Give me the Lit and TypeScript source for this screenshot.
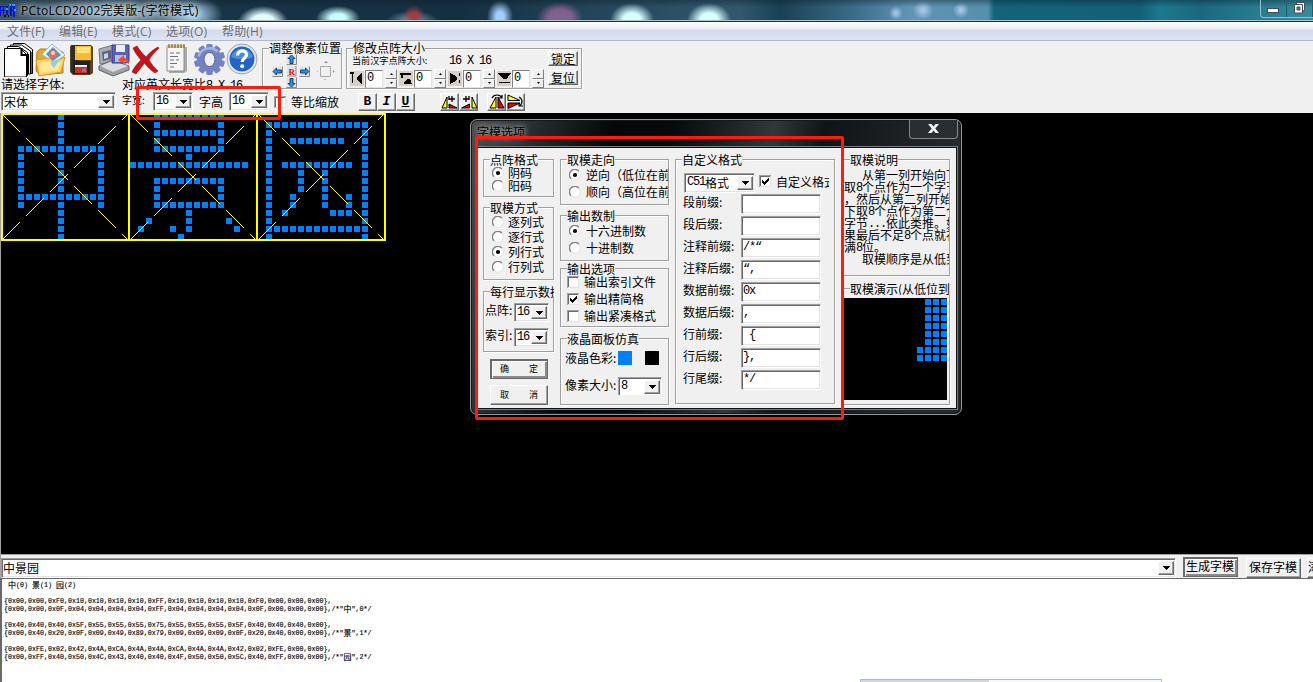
import { LitElement, html, svg, css, nothing } from "lit";
import { customElement } from "lit/decorators.js";

type Glyph = { ch: string; low: string[]; high: string[] };

const bytes = (s: string) => s.split(" ");

const GLYPHS: Glyph[] = [
  {
    ch: "中",
    low: bytes("00 00 F0 10 10 10 10 FF 10 10 10 10 F0 00 00 00"),
    high: bytes("00 00 0F 04 04 04 04 FF 04 04 04 04 0F 00 00 00"),
  },
  {
    ch: "景",
    low: bytes("40 40 40 5F 55 55 55 75 55 55 55 5F 40 40 40 00"),
    high: bytes("00 40 20 0F 09 49 89 79 09 09 09 0F 20 40 00 00"),
  },
  {
    ch: "园",
    low: bytes("00 FE 02 42 4A CA 4A 4A CA 4A 4A 42 02 FE 00 00"),
    high: bytes("00 FF 40 50 4C 43 40 40 4F 50 50 5C 40 FF 00 00"),
  },
];

/* ---------- small building blocks ---------- */
const tri = svg`<path d="M0 0h7v1H0zM1 1h5v1H1zM2 2h3v1H2zM3 3h1v1H3z"/>`;
const combo = (cls: string, text: unknown) => html`<div class="combo ${cls}">
  <span class="val">${text}</span
  ><span class="drop"><svg width="7" height="4" shape-rendering="crispEdges">${tri}</svg></span>
</div>`;
const num = (t: string) => html`<span class="m">${t}</span>`;
const radio = (label: string, on = false) => html`<div class="opt">
  <svg width="12" height="12">
    <circle cx="6" cy="6" r="5.3" fill="#fff" stroke="#e3e3e3" />
    <path d="M2 9.8A5.3 5.3 0 0 1 9.8 2" fill="none" stroke="#808080" stroke-width="1.3" />
    ${on ? svg`<circle cx="6" cy="6" r="2.1"/>` : nothing}
  </svg><span>${label}</span>
</div>`;
const checkIcon = (on: boolean) => html`<svg width="12" height="12" shape-rendering="crispEdges">
  <path fill="#fff" d="M0 0h12v12H0z" />
  <path fill="#a0a0a0" d="M0 0h12v1H1v11H0z" />
  <path fill="#696969" d="M1 1h10v1H2v9H1z" />
  <path fill="#e3e3e3" d="M11 1h1v11H1v-1h10z" />
  ${on ? svg`<path d="M3 5h1v1h1v1h1V6h1V5h1V4h1V3h1v3H9v1H8v1H7v1H6v1H5V9H4V8H3z"/>` : nothing}
</svg>`;
const check = (label: string, on = false) => html`<div class="opt chk">${checkIcon(on)}<span>${label}</span></div>`;
const group = (cls: string, legend: string, body: unknown) => html`<section class="group ${cls}">
  <span class="legend">${legend}</span>${body}
</section>`;

/* ---------- toolbar icons ---------- */
const icoNew = html`<svg width="32" height="34" viewBox="0 0 32 34">
  <g stroke="#000" fill="#fff">
    <path d="M9.500 .5h11l8 6v24h-19z" /><path d="M6.500 2h11l9 6v23h-20z" />
    <path d="M3.500 3.500h11l9 6v23h-20z" /><path d="M.5 5.500h16l6 6V34H.5z" />
  </g>
  <path d="M17.500 5v7h5l1.500 2v16" fill="none" stroke="#000" stroke-width="2" />
  <path d="M27 9v22M24.500 11v20" stroke="#000" stroke-width="1.200" />
</svg>`;
const icoOpen = html`<svg width="32" height="34" viewBox="0 0 32 34">
  <path d="M2 9l3-3h7l3 3h13v21l-23 2-4-4z" fill="#e3a92d" stroke="#b77e12" />
  <path d="M7 11L17 1l13 11-11 9z" fill="#e8f5ff" stroke="#8db9d8" />
  <path d="M11 11l7-7 8 8-8 6z" fill="#3b9be0" /><circle cx="18" cy="11" r="4" fill="#f4694c" />
  <circle cx="18" cy="10" r="2" fill="#ffd2c0" />
  <path d="M1 17l14-2 3 4 12-5-4 15-22 4z" fill="#ffd463" stroke="#d79b24" />
  <path d="M4 20l10-2 3 4 9-3-3 8-17 3z" fill="#ffe799" />
  <path d="M15 20l10-4-6 9z" fill="#8bd0f0" />
</svg>`;
const icoSave = html`<svg width="26" height="34" viewBox="0 0 26 34">
  <path d="M2 2h20l2 2v26l-3 2H4l-3-3V4z" fill="#5a4320" />
  <path d="M3 2h7v28l-6 1-2-3V4z" fill="#2c2c2a" />
  <path d="M6 3h16v14H6z" fill="#f5bd2e" /><path d="M8 4h13v6H8z" fill="#ffd968" />
  <path d="M8 6h13M8 9h13" stroke="#fff0b0" />
  <path d="M4 18h17v13H4z" fill="#222" /><path d="M6 22h12v8H6z" fill="#d72a18" />
  <path d="M6 22h12v2H6z" fill="#eee" /><path d="M13 26l4-1v4h-4z" fill="#5d80d8" />
</svg>`;
const icoConvert = html`<svg width="33" height="34" viewBox="0 0 33 34">
  <path d="M1 6l14-4v17L2 21z" fill="#a9adb5" stroke="#73777f" />
  <path d="M4 9l9-2v9l-8 2z" fill="#5c6578" /><path d="M6 11l4-1v5l-4 1z" fill="#c6d2e6" />
  <path d="M1 23l13-6 17 6v4l-16 6-14-6z" fill="#9c9fa4" stroke="#62656a" />
  <path d="M2 23l13-5 15 5-15 6z" fill="#d9dbde" />
  <path d="M14 2h17v17l-3 1H14z" fill="#5b60b4" stroke="#393c88" />
  <path d="M18 2h9v7h-9z" fill="#e9ecfa" /><path d="M17 12h11v7H17z" fill="#b6bce6" />
  <path d="M20 17l6-5v3c5 0 6 4 4 7 0-3-2-4-4-4v3z" fill="#ef4a22" />
</svg>`;
const icoDelete = html`<svg width="30" height="34" viewBox="0 0 30 34">
  <path d="M1 5l4-2c3 5 6 8 9 11 4-5 8-8 12-10l1 1c-4 4-8 8-10 12 3 5 6 8 9 11l-3 2c-5-3-8-7-10.500-10-3 4-6 8-8.500 11l-4-2c2-5 6-9 9-12C6 13 3 10 1 5z" fill="#c6121b" stroke="#970b12" stroke-width=".6" />
</svg>`;
const icoNote = html`<svg width="24" height="34" viewBox="0 0 24 34">
  <path d="M3 4h18v24l-3 2H3z" fill="#aaa" /><path d="M1 3h17v25H1z" fill="#f5f6f3" stroke="#8b8f8b" />
  <path d="M1 2h18v3H1z" fill="#e7c766" />
  <path d="M3 1v4M6 1v4M9 1v4M12 1v4M15 1v4M18 1v4" stroke="#5d543d" />
  <path d="M4 10h4m2 0h4M4 13.500h8M4 17h4m2 0h3M4 20.500h7M4 24h4" stroke="#6b757d" stroke-width="1.200" />
</svg>`;
const icoGear = html`<svg width="31" height="34" viewBox="-15.500 -16.500 31 34">
  <g fill="#7382c0">
    ${[0, 36, 72, 108, 144].map((a) => svg`<rect x="-3.200" y="-15.500" width="6.400" height="31" rx="1.500" transform="rotate(${a})"/>`)}
    <circle r="12.500" />
  </g>
  <path d="M-11-3A11.500 11.500 0 0 1 8-8" fill="none" stroke="#a7b4e2" stroke-width="2.500" />
  <ellipse rx="5.500" ry="7" fill="#f0f0f0" stroke="#53629e" />
</svg>`;
const icoHelp = html`<svg width="32" height="34" viewBox="0 0 32 34">
  <circle cx="16" cy="16" r="15" fill="#e4e8ef" stroke="#9ba3b2" />
  <circle cx="16" cy="16" r="12.500" fill="#2465c4" />
  <path d="M5 14a11.500 11.500 0 0 1 22 0c-6 3-15 3-22 0z" fill="#4d8ddd" />
  <path d="M11.500 12.500c0-6 9-6 9-.8 0 3.300-4.300 3.500-4.300 7.300" fill="none" stroke="#fff" stroke-width="3.200" />
  <circle cx="16.200" cy="23.300" r="2" fill="#fff" />
</svg>`;

const arrow = (x: number, y: number, r: number) => svg`<g transform="translate(${x} ${y})">
  <path d="M-5-5H5V5H-5z" fill="#dfe3e8"/><path d="M5-5V5H-5" fill="none" stroke="#888"/>
  <g transform="rotate(${r})"><path d="M0-4.500L3.500-1H1.500V4h-3V-1h-2z" fill="#2f8ee0" stroke="#0b3566" stroke-width=".9"/></g></g>`;

const nudgePad = html`<svg width="78" height="39" viewBox="263 49 78 39">
  ${arrow(291.5, 59.5, 0)}${arrow(277.5, 71.500, -90)}${arrow(304.5, 71.500, 90)}${arrow(291.5, 82.500, 180)}
  <path d="M287 66h9v10h-9z" fill="#e4e4e4" /><path d="M296 66v10h-9" fill="none" stroke="#888" />
  <text x="288.5" y="75" class="rkey">R</text>
  <path d="M320.500 66.500h10v10h-10z" fill="none" stroke="#a8a8a8" />
  <path d="M324 63h4l-2-2zM324 79h2l-1 1zM318 71v1h-1zM333 70v3l1.500-1.500z" fill="#888" />
</svg>`;

const EDGE_PATHS = [
  "M0 1h4v2H3v9H2V3H0zM12 2v11h-1V12H10V11H9V10H8V9H7V6H8V5H9V4H10V3h1V2z",
  "M1 2h11v2H4v3H2V4H1zM5 13l1-3 2-2h2l2 2 1 3z",
  "M11 2h1v3h-1zM11 9h1v3h-1zM2 2v11h1v-1h2v-1h2v-1h1V9h1V6H8V5H7V4H5V3H3V2z",
  "M1 2h13l-3 4-2 2H6L4 6zM2 11h11v1H2z",
];
const edgeCtl = (d: string) => html`<div class="edge">
  <svg width="14" height="15" viewBox="0 0 14 15" shape-rendering="crispEdges"><path fill="#d4d0c8" d="M0 0h14v15H0z" /><path d=${d} /></svg>
  <span class="field">${num("0")}</span>
  <span class="spin"><i><svg width="3" height="2"><path d="M0 2h3L1.500 0z" /></svg></i><i><svg width="3" height="2"><path d="M0 0h3L1.500 2z" /></svg></i></span>
</div>`;

const flips = [
  svg`<path d="M1 15L6 4v11z" fill="#ff0" stroke="#000"/><path d="M8 15v-4l8 4z" fill="#e00" stroke="#000"/><path d="M8 6h6m-3-3v6M8 3v4" stroke="#000" stroke-width="1.300"/>`,
  svg`<path d="M17 15L12 4v11z" fill="#ff0" stroke="#000"/><path d="M9.500 15v-4l-8 4z" fill="#e00" stroke="#000"/><path d="M3 6h6M6 3v6M9 3v4" stroke="#000" stroke-width="1.300"/>`,
  svg`<path d="M2 15L8 4v11z" fill="#ff0" stroke="#000"/><path d="M16 15L10 4v11z" fill="#e00" stroke="#000"/><path d="M4 5c2-4 8-4 10 0m0-3v3h-3" fill="none" stroke="#000" stroke-width="1.200"/>`,
  svg`<path d="M1 7.500V2l12 5.500z" fill="#ff0" stroke="#000"/><path d="M1 10v5.500L13 10z" fill="#e00" stroke="#000"/><path d="M12 4c4 2 4 7 0 9m4 0h-4v-3" fill="none" stroke="#000" stroke-width="1.200"/>`,
];
const flipBtn = (g: unknown) => html`<span class="btn sq"><svg width="18" height="17" viewBox="0 0 18 17">${g}</svg></span>`;

/* ---------- LCD preview ---------- */
const cells = (g: Glyph, gi: number) => {
  const out: unknown[] = [];
  for (let c = 0; c < 16; c++) {
    const v = parseInt(g.low[c], 16) | (parseInt(g.high[c], 16) << 8);
    for (let r = 0; r < 16; r++)
      if ((v >> r) & 1) out.push(svg`<rect x=${2 + gi * 128 + c * 8} y=${1 + r * 8} width="6" height="6"/>`);
  }
  return out;
};
const guides = (x: number) => {
  let d = "";
  for (let i = 0; i < 126; i++)
    if (i % 24 < 18) d += `M${x + 2 + i} ${1 + i}h1v1h-1zM${x + 2 + i} ${126 - i}h1v1h-1z`;
  return svg`<path d=${d}/>`;
};
const lcd = html`<svg width="388" height="130" shape-rendering="crispEdges">
  <g fill="#0080ff">${GLYPHS.map(cells)}</g>
  <g fill="#ff0">${[0, 128, 256].map(guides)}</g>
  <path d="M1 0h385v2H1zM1 126h385v2H1zM1 0h2v128H1zM128 0h2v128h-2zM256 0h2v128h-2zM384 0h2v128h-2z" fill="#ff0" />
</svg>`;

const demoCells = [0, 1, 2, 3].flatMap((c) =>
  Array.from({ length: 8 }, (_, r) => (c > 0 || r > 5 ? svg`<rect x=${73 + c * 8} y=${1 + r * 8} width="6" height="6"/>` : nothing))
);

const hexRow = (b: string[]) => "{" + b.map((x) => "0x" + x).join(",") + "},";

const FIELDS: [string, string][] = [
  ["段前缀:", ""], ["段后缀:", ""], ["注释前缀:", "/*“"], ["注释后缀:", "“,"], ["数据前缀:", "0x"],
  ["数据后缀:", ","], ["行前缀:", " {"], ["行后缀:", "},"], ["行尾缀:", "*/"],
];

@customElement("app-root")
class AppRoot extends LitElement {
  static styles = css`
    :host { display: block; position: relative; width: 1313px; height: 682px; overflow: hidden; background: #f0f0f0;
      font: 12px/13px "Noto Sans CJK SC", sans-serif; color: #000; white-space: nowrap; }
    * { box-sizing: border-box; }
    svg { display: block; flex: none; }
    .m { font-family: "Liberation Mono", monospace; font-size: 12px; line-height: 10px; letter-spacing: -1.2px; white-space: pre; }

    .title { height: 22px; display: flex; justify-content: space-between; border-bottom: 1px solid #173546; box-shadow: inset 0 -1px #a9c4ce;
      background:
        linear-gradient(#0a1c2866 0, transparent 7px),
        radial-gradient(ellipse 75px 14px at 110px 12px, #9db8c8d0 20%, transparent),
        radial-gradient(ellipse 30px 18px at 193px 15px, #a4cbe6 10%, transparent),
        radial-gradient(ellipse 25px 16px at 263px 22px, #e4fbff 45%, transparent),
        radial-gradient(ellipse 22px 12px at 338px 18px, #c8fcff 35%, transparent),
        radial-gradient(ellipse 11px 11px at 414px 16px, #a13b43 25%, transparent),
        radial-gradient(ellipse 26px 9px at 412px 20px, #76889c 15%, transparent),
        radial-gradient(ellipse 13px 17px at 500px 17px, #a1d0ff 30%, transparent),
        radial-gradient(ellipse 23px 16px at 560px 18px, #81608e 50%, transparent),
        radial-gradient(ellipse 22px 17px at 632px 20px, #d8ffff 40%, transparent),
        radial-gradient(ellipse 22px 17px at 709px 20px, #d8ffff 40%, transparent),
        radial-gradient(circle 7px at 896px 13px, #a5c5e4 15%, transparent),
        radial-gradient(circle 10px at 923px 10px, #a5c5e4 15%, transparent),
        radial-gradient(circle 8px at 961px 10px, #a5c5e4 15%, transparent),
        linear-gradient(90deg, #3d5563 0, #506a7a 170px, #183447 220px, #142f40 460px, #25465a 600px, #31586c 740px, #1a4054 780px, #386a84 850px, #6095b0 910px, #5590ab 988px, #12647a 994px, #126078 1140px, #1c788e 1160px, #1a6880 1200px, #257a8d 1250px, #388b9b 1313px); }
    .name { display: flex; align-items: center; height: 21px; font-size: 12px; }
    .name .cap { margin-left: 4px; font-family: "Open Sans", "Noto Sans CJK SC", sans-serif; letter-spacing: .3px; text-shadow: 0 0 5px #dcebf4, 0 0 8px #dcebf4; }
    .winbtns { width: 53px; height: 18px; display: flex; border: 1px solid #8cc3cc; border-width: 0 0 1px 1px; border-radius: 0 0 0 4px; }
    .winbtns span { width: 28px; border-right: 1px solid #205d6b; display: flex; justify-content: center; padding-top: 1px; }

    .menu { height: 19px; display: grid; grid-template-columns: 52px 53px 54px 56px 60px; padding: 3px 0 0 7px; background: linear-gradient(#fff 0, #e9edf5 7px, #d4daec 8px, #dfe4f4 18px); border-bottom: 1px solid #b2b9cb;
      font: 12px/14px "Open Sans", "Noto Sans CJK SC", sans-serif; letter-spacing: .15px; color: #6d6d6d; }

    .tools { height: 72px; }
    .upper { height: 51px; display: flex; align-items: flex-start; }
    .left { width: 262px; height: 51px; }
    .icons { display: grid; grid-template-columns: 31px 34px 29px 34px 34px 28px 32px 32px; height: 35px; padding: 2px 0 0 4px; }
    .labels { display: grid; grid-template-columns: 121px 1fr; height: 16px; padding: 1px 0 0 1px; line-height: 14px; }
    .group { position: relative; border: 1px solid #a0a0a0; box-shadow: 1px 1px #fff, inset 1px 1px #fff; }
    .legend { position: absolute; left: 6px; top: -7px; height: 13px; background: #f0f0f0; line-height: 13px; z-index: 1; }
    .g-pos .legend, .g-size .legend { top: -8px; }
    .g-pos { width: 80px; height: 41px; margin-top: 7px; }
    .g-size { width: 236px; height: 41px; margin: 7px 0 0 4px; display: grid; grid-template-columns: 200px 1fr; }
    .rkey { font: bold 9px "Liberation Serif", serif; fill: #e01010; }
    .info { display: flex; height: 20px; padding: 5px 0 0 5px; font-size: 9.1px; }
    .info > span:first-child { width: 97px; }
    .info .m { line-height: 15px; }
    .edges { display: flex; gap: 2px; padding-left: 3px; }
    .edge { display: flex; width: 47px; height: 19px; align-items: center; }
    .field { width: 18px; height: 18px; background: #fff; border: 1px solid #808080; border-right-color: #e3e3e3; border-bottom-color: #e3e3e3; padding: 0 0 1px 1px; margin-left: 1px; display: flex; align-items: center; }
    .spin { width: 12px; height: 19px; margin-left: 2px; display: grid; grid-template-rows: 1fr 1fr; }
    .spin i { border: 1px solid; border-color: #fff #808080 #808080 #fff; display: flex; align-items: center; justify-content: center; }
    .side { display: flex; flex-direction: column; gap: 4px; padding: 2px 0 0 1px; }
    .btn { background: #f0f0f0; border: 1px solid; border-color: #fff #696969 #696969 #fff; box-shadow: inset -1px -1px #a0a0a0; display: flex; align-items: center; justify-content: center; flex: none; line-height: 12px; }
    .side .btn { width: 30px; height: 15px; }
    .lower { display: flex; height: 20px; align-items: center; padding: 0 0 1px 1px; }
    .combo { display: flex; height: 19px; background: #fff; border: 1px solid; border-color: #a0a0a0 #fff #fff #a0a0a0; box-shadow: inset 1px 1px #696969, inset -1px -1px #e3e3e3; padding: 1px 1px 2px 2px; align-items: stretch; flex: none; }
    .combo .val { flex: 1; display: flex; align-items: center; line-height: 13px; }
    .combo .m, .field .m { line-height: 13px; }
    .drop { width: 16px; background: #f0f0f0; border: 1px solid; border-color: #fff #696969 #696969 #fff; box-shadow: inset -1px -1px #a0a0a0; display: flex; align-items: center; justify-content: center; margin-top: 1px; }
    .c-font { width: 115px; }
    .c-16 { width: 40px; }
    .wlab { width: 37px; padding-left: 6px; font-size: 10px; height: 16px; line-height: 12px; }
    .hlab { width: 36px; padding-left: 6px; }
    .opt { display: flex; align-items: center; }
    .scale { margin-left: 5px; gap: 5px; }
    .scale + .bius { margin-left: 19px; }
    .sq { width: 19px; height: 18px; }
    .bius { display: flex; font: bold 13px "Liberation Mono", monospace; }
    .flips { display: flex; margin-left: 25px; }
    .flips + .flips { margin-left: 9px; }
    .it { font-style: italic; } .un { text-decoration: underline; }

    .stage { height: 441px; background: #000; border-left: 1px solid #a0a0a0; }
    .stage svg { margin-left: -1px; }

    .dialog { position: absolute; left: 470px; top: 119px; width: 492px; height: 296px; border: 1px solid #96999b; border-radius: 7px;
      background: linear-gradient(100deg, #4b4d4f 0, #26292b 70px, #050708 140px, #07090a 200px, #33373a 300px, #111416 350px, #26292b 480px); box-shadow: inset 0 0 0 1px #15191b; }
    .dtitle { height: 28px; display: flex; justify-content: space-between; }
    .dtitle .cap { margin: 5px 0 0 6px; font: 12px/14px "Noto Sans CJK SC", sans-serif; text-shadow: 0 0 5px #bbb, 0 0 9px #aaa; }
    .close { width: 49px; height: 19px; margin-right: 3px; border: 1px solid #85888a; border-top: 0; border-radius: 0 0 4px 4px; display: flex; justify-content: center; padding-top: 4px; background: #2a2e31; }
    .client { margin-left: 7px; width: 478px; height: 260px; padding: 11px 0 0 5px; background: #f0f0f0; display: flex; align-items: flex-start; box-shadow: 0 0 0 1px #111, 0 0 0 2px #777a7c; }
    .col { display: flex; flex-direction: column; margin-right: 6px; flex: none; }
    .col1 { width: 71px; } .col2 { width: 109px; } .col3 { width: 160px; } .col4 { width: 107px; margin: 0 0 0 2px; }
    .body { overflow: hidden; }
    .col1 .opt { height: 15px; padding-left: 8px; gap: 4px; }
    .col1 .tight .opt { height: 13px; }
    .a1 { height: 38px; } .a2 { height: 73px; margin-top: 10px; } .a3 { height: 61px; margin-top: 11px; }
    .a1 .body, .a2 .body { padding-top: 6px; }
    .a3 .legend { width: 64px; overflow: hidden; }
    .a3 .body { padding: 11px 0 0 1px; display: grid; gap: 7px; }
    .pair { display: flex; height: 18px; }
    .pair > span { width: 29px; line-height: 13px; flex: none; }
    .pair .combo { width: 35px; height: 19px; }
    .okrow { display: grid; gap: 6px; margin: 7px 0 0 7px; }
    .okrow .btn { width: 58px; height: 20px; font-size: 9px; gap: 20px; }
    .strong { outline: 1px solid #696969; outline-offset: -1px; box-shadow: inset 1px 1px #696969, inset 2px 2px #fff, inset -2px -2px #8a8a8a; }
    .col2 .opt { height: 17px; padding-left: 8px; gap: 5px; }
    .col2 .chk { padding-left: 6px; gap: 5px; }
    .b1 { height: 46px; } .b2 { height: 46px; margin-top: 10px; } .b3 { height: 59px; margin-top: 7px; } .b4 { height: 67px; margin-top: 11px; }
    .b1 .body, .b2 .body { padding-top: 6px; } .b3 .body { padding-top: 4px; }
    .b4 .body { padding: 12px 0 0 4px; }
    .colors { display: flex; height: 26px; }
    .colors > span { width: 53px; flex: none; }
    .colors b { width: 14px; height: 14px; flex: none; background: #0080ff; margin-right: 13px; }
    .colors b.k { background: #000; margin-right: 0; }
    .size .combo { width: 44px; height: 20px; } .size > span { width: 53px; line-height: 15px; }
    .c1 { height: 245px; }
    .fmt { display: flex; height: 33px; padding: 13px 0 0 8px; }
    .fmt .combo { width: 71px; height: 20px; }
    .fmt .opt { margin-left: 4px; gap: 5px; width: 70px; height: 16px; overflow: hidden; }
    .rowf { display: grid; grid-template-columns: 58px 80px; height: 22px; padding: 1px 0 0 7px; }
    .rowf > span { line-height: 15px; }
    .rowf .inp { height: 20px; background: #fff; border: 1px solid; border-color: #a0a0a0 #fff #fff #a0a0a0; box-shadow: inset 1px 1px #696969, inset -1px -1px #e3e3e3; display: flex; align-items: center; padding: 0 1px 1px; }
    .inp .m { line-height: 13px; }
    .d1 { height: 117px; } .d2 { height: 117px; margin-top: 12px; }
    .d1 .body { padding-top: 9px; }
    .d1 .body p { margin: 0; height: 12px; line-height: 12px; display: flex; align-items: center; }
    .d1 .body p.in { padding-left: 18px; }
    .d1 .m { line-height: 12px; padding-top: 1px; }
    .d2 .legend { width: 101px; overflow: hidden; }
    .demo { width: 104px; height: 102px; margin: 9px 0 0 -1px; background: #000; }
    .demo svg { margin-left: 1px; }

    .mark { position: absolute; border: 3px solid #ff1c0c; border-radius: 2px; }
    .mark-size { left: 136px; top: 86px; width: 145px; height: 34px; }
    .mark-dialog { left: 475px; top: 136px; width: 369px; height: 284px; }

    .entry { display: flex; height: 24px; border-top: 1px solid #a0a0a0; padding-top: 3px; border-left: 1px solid #a0a0a0; }
    .entry .combo { width: 1175px; height: 20px; padding-left: 1px; }
    .entry .val { padding-bottom: 1px; }
    .entry .btn { width: 55px; height: 20px; margin: 0 0 0 8px; padding: 0 1px 2px 0; }
    .entry .strong { margin: -1px 0 0 7px; }
    .entry .btn:last-child { margin-left: 6px; justify-content: flex-start; }
    .out { height: 104px; background: #fff; border: 1px solid #696969; border-width: 1px 0 0 2px; padding: 2px 0 0 2px; font: 6.667px/8px "Liberation Mono", monospace; color: #000; -webkit-text-stroke: .15px #000; }
    .out div { height: 8px; white-space: pre; }
    .out .cj { display: inline-block; width: 8px; height: 8px; font: 8px/8px "Noto Sans CJK SC", sans-serif; vertical-align: top; }
    .out .gap { margin-top: 8px; }
    .tip { position: absolute; left: 860px; top: 679px; width: 302px; height: 6px; border: 1px solid #8cc6ef; background: linear-gradient(90deg, #cfd8e0 128px, #f4f9fd 128px); }
  `;

  render() {
    const cj = (c: string) => html`<span class="cj">${c}</span>`;
    return html`
      <header class="title">
        <div class="name">
          <svg width="17" height="20" viewBox="0 0 17 20" shape-rendering="crispEdges">
            <path d="M0 5h6v1H4v8H3V6H1v9H0z M1 9h4v1H1zM6 5h2v9H6zM8 4h3v1H8zM10 4h5v12h-2V6h-1v9h-2zM9 9h6v1H9z" fill="#0013d8" />
            <path d="M9 3h2v2H9zM12 3h3v2h-3zM6 7h2v2H6zM14 8h2v2h-2z" fill="#16a5ff" /><path d="M4 14h2v2H4zM8 14h1v2H8z" fill="#000" />
          </svg>
          <span class="cap">PCtoLCD2002完美版-(字符模式)</span>
        </div>
        <div class="winbtns">
          <span><svg width="13" height="14"><rect x=".5" y="7.500" width="11" height="4" fill="#fff" stroke="#444a5c" /></svg></span>
          <span><svg width="13" height="14"><path d="M3.500 1.500h8v8h-8z" fill="#fff" stroke="#444a5c" /><path d="M1.500 3.500h8v8.500h-8z" fill="#fff" stroke="#444a5c" /><path d="M4 6h3v3H4z" fill="#3a8596" stroke="#444a5c" /></svg></span>
        </div>
      </header>
      <nav class="menu">${["文件(F)", "编辑(E)", "模式(C)", "选项(O)", "帮助(H)"].map((t) => html`<span>${t}</span>`)}</nav>

      <div class="tools">
        <div class="upper">
          <div class="left">
            <div class="icons">${icoNew}${icoOpen}${icoSave}${icoConvert}${icoDelete}${icoNote}${icoGear}${icoHelp}</div>
            <div class="labels"><span>请选择字体:</span><span>对应英文长宽比${num("8 X 16")}</span></div>
          </div>
          ${group("g-pos", "调整像素位置", nudgePad)}
          ${group("g-size", "修改点阵大小", html`
            <div>
              <div class="info"><span>当前汉字点阵大小:</span>${num("16 X 16")}</div>
              <div class="edges">${EDGE_PATHS.map(edgeCtl)}</div>
            </div>
            <div class="side"><span class="btn">锁定</span><span class="btn">复位</span></div>`)}
        </div>
        <div class="lower">
          ${combo("c-font", "宋体")}<span class="wlab">字宽:</span>${combo("c-16", num("16"))}
          <span class="hlab">字高</span>${combo("c-16", num("16"))}
          <div class="opt scale">${checkIcon(false)}<span>等比缩放</span></div>
          <div class="bius"><span class="btn sq">B</span><span class="btn sq it">I</span><span class="btn sq un">U</span></div>
          <div class="flips">${flipBtn(flips[0])}${flipBtn(flips[1])}</div>
          <div class="flips">${flipBtn(flips[2])}${flipBtn(flips[3])}</div>
        </div>
      </div>

      <main class="stage">${lcd}</main>

      <div class="entry">
        ${combo("", "中景园")}
        <span class="btn strong">生成字模</span><span class="btn">保存字模</span><span class="btn">添加</span>
      </div>
      <div class="out">
        <div> ${GLYPHS.map((g, i) => html`${cj(g.ch)}(${i}) `)}</div>
        ${GLYPHS.map((g, i) => html`<div class="gap">${hexRow(g.low)}</div><div>${hexRow(g.high)}/*"${cj(g.ch)}",${i}*/</div>`)}
      </div>

      <div class="dialog">
        <div class="dtitle">
          <span class="cap">字模选项</span>
          <span class="close"><svg width="11" height="9"><path d="M0 0h3.500l2 2.500L7.500 0H11L7.300 4.500 11 9H7.500l-2-2.500-2 2.500H0l3.700-4.500z" fill="#f4f4f4" /></svg></span>
        </div>
        <div class="client">
          <div class="col col1">
            ${group("a1", "点阵格式", html`<div class="body tight">${radio("阴码", true)}${radio("阳码")}</div>`)}
            ${group("a2", "取模方式", html`<div class="body">${radio("逐列式")}${radio("逐行式")}${radio("列行式", true)}${radio("行列式")}</div>`)}
            ${group("a3", "每行显示数据", html`<div class="body">
              <div class="pair"><span>点阵:</span>${combo("", num("16"))}</div>
              <div class="pair"><span>索引:</span>${combo("", num("16"))}</div>
            </div>`)}
            <div class="okrow">
              <span class="btn strong"><span>确</span><span>定</span></span>
              <span class="btn"><span>取</span><span>消</span></span>
            </div>
          </div>
          <div class="col col2">
            ${group("b1", "取模走向", html`<div class="body">${radio("逆向（低位在前）", true)}${radio("顺向（高位在前）")}</div>`)}
            ${group("b2", "输出数制", html`<div class="body">${radio("十六进制数", true)}${radio("十进制数")}</div>`)}
            ${group("b3", "输出选项", html`<div class="body">${check("输出索引文件")}${check("输出精简格", true)}${check("输出紧凑格式")}</div>`)}
            ${group("b4", "液晶面板仿真", html`<div class="body">
              <div class="colors"><span>液晶色彩:</span><b></b><b class="k"></b></div>
              <div class="pair size"><span>像素大小:</span>${combo("", num("8"))}</div>
            </div>`)}
          </div>
          <div class="col col3">
            ${group("c1", "自定义格式", html`
              <div class="fmt">${combo("", html`${num("C51")}格式`)}<div class="opt">${checkIcon(true)}<span>自定义格式</span></div></div>
              ${FIELDS.map(([l, v]) => html`<div class="rowf"><span>${l}</span><span class="inp">${num(v)}</span></div>`)}`)}
          </div>
          <div class="col col4">
            ${group("d1", "取模说明", html`<div class="body">
              <p class="in">从第一列开始向下</p>
              <p>取${num("8")}个点作为一个字节</p>
              <p>，然后从第二列开始向</p>
              <p>下取${num("8")}个点作为第二个</p>
              <p>字节${num("...")}依此类推。如</p>
              <p>果最后不足${num("8")}个点就补</p>
              <p>满${num("8")}位。</p>
              <p class="in">取模顺序是从低到</p>
            </div>`)}
            ${group("d2", "取模演示(从低位到高位)", html`<div class="demo"><svg width="104" height="102" fill="#0080ff" shape-rendering="crispEdges">${demoCells}</svg></div>`)}
          </div>
        </div>
      </div>

      <div class="mark mark-size"></div>
      <div class="mark mark-dialog"></div>
      <div class="tip"></div>
    `;
  }
}
